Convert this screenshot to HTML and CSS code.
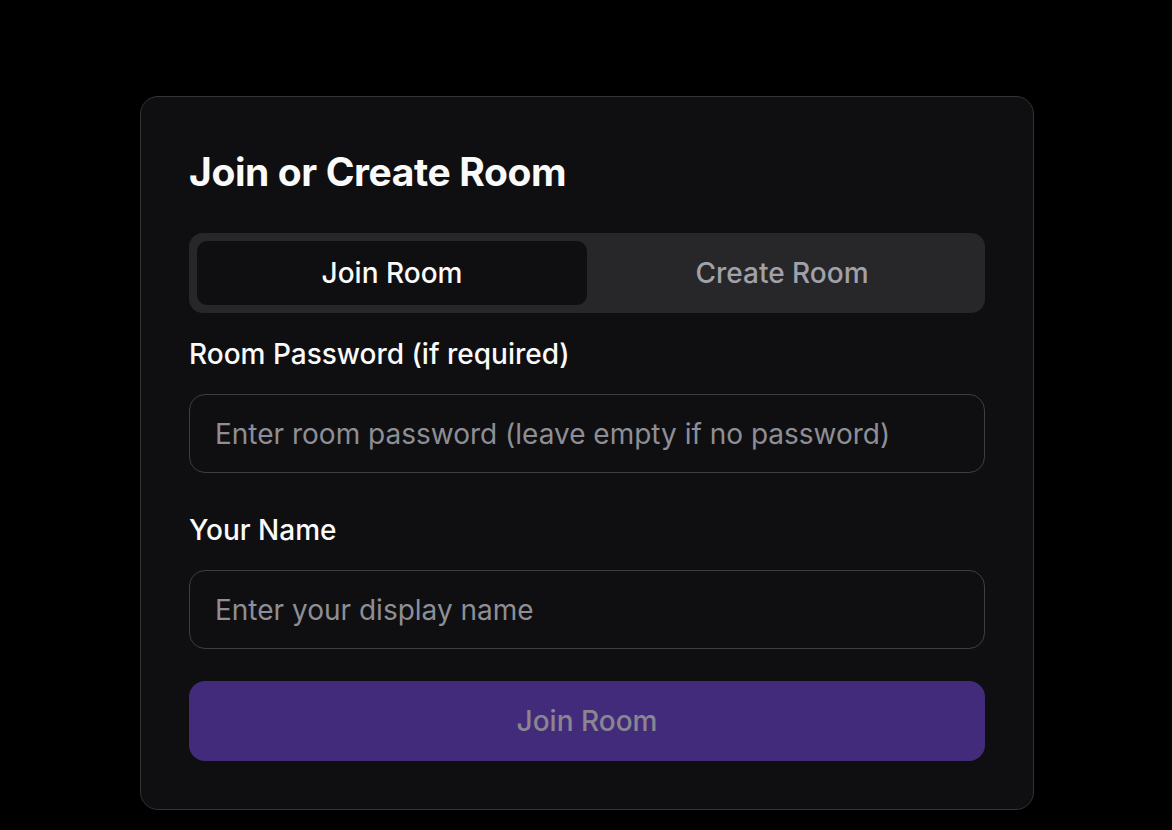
FILE: index.html
```html
<!DOCTYPE html>
<html lang="en">
<head>
<meta charset="utf-8">
<title>Join or Create Room</title>
<link rel="stylesheet" href="styles.css">
</head>
<body>
<main class="page">
  <section class="card">
    <h1 class="title">Join or Create Room</h1>
    <div class="tabs">
      <button class="tab tab-active" type="button">Join Room</button>
      <button class="tab" type="button">Create Room</button>
    </div>
    <div class="field">
      <label class="label" for="pw">Room Password (if required)</label>
      <input class="input" id="pw" type="password" placeholder="Enter room password (leave empty if no password)">
    </div>
    <div class="field field-second">
      <label class="label" for="name">Your Name</label>
      <input class="input" id="name" type="text" placeholder="Enter your display name">
    </div>
    <button class="submit" type="button" disabled>Join Room</button>
  </section>
</main>
</body>
</html>
```

FILE: styles.css
```css
* { box-sizing: border-box; }
html, body { margin: 0; padding: 0; background: #000; }
body {
  font-family: Inter, "Noto Sans", "Liberation Sans", sans-serif;
  color: #fafafa;
}
.page {
  padding: 96px 0 0 2px;
  display: flex;
  justify-content: center;
}
.card {
  width: 894px;
  background: #0f0f11;
  border: 1px solid #333338;
  border-radius: 18px;
  padding: 51px 48px 48px;
  display: flex;
  flex-direction: column;
}
.title {
  margin: 0;
  font-size: 39px;
  line-height: 48px;
  font-weight: 700;
  letter-spacing: -0.4px;
  color: #fafafa;
}
.tabs {
  margin-top: 37px;
  height: 80px;
  background: #27272a;
  border-radius: 14px;
  padding: 8px;
  display: grid;
  grid-template-columns: 1fr 1fr;
}
.tab {
  border: 0;
  background: transparent;
  font-family: inherit;
  font-size: 28px;
  font-weight: 500;
  color: #a1a1aa;
  border-radius: 10px;
  padding: 0;
}
.tab-active {
  background: #0f0f11;
  color: #fafafa;
}
.field {
  display: flex;
  flex-direction: column;
  margin-top: 25px;
}
.field-second { margin-top: 41px; }
.label {
  font-size: 28px;
  line-height: 32px;
  font-weight: 500;
  color: #fafafa;
}
.input {
  margin-top: 24px;
  height: 79px;
  border: 1px solid #3d3d44;
  border-radius: 16px;
  background: #0f0f11;
  padding: 0 25px;
  font-family: inherit;
  font-size: 28px;
  font-weight: 400;
  color: #fafafa;
  outline: none;
}
.input::placeholder { color: #8e8e96; }
.submit {
  margin-top: 32px;
  height: 80px;
  border: 0;
  border-radius: 16px;
  background: #432b7b;
  color: #8a8690;
  font-family: inherit;
  font-size: 28px;
  font-weight: 500;
}
```
